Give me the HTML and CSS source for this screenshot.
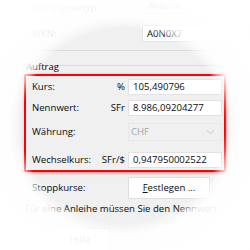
FILE: index.html
```html
<!DOCTYPE html>
<html lang="de">
<head>
<meta charset="utf-8">
<link rel="stylesheet" href="styles.css">
</head>
<body>
<div class="dialog">
  <div class="row r-type">
    <span class="lbl">Wertpapiertyp:</span>
    <span class="combo-top">Anleihe</span>
  </div>
  <div class="row r-wkn">
    <span class="lbl">WKN:</span>
    <span class="field wide">A0N0X7</span>
  </div>
  <div class="sep"></div>
  <div class="group">
    <div class="legend">Auftrag</div>
    <div class="highlight">
      <div class="frow f1">
        <span class="flbl">Kurs:</span><span class="unit">%</span><span class="field">105,490796</span>
      </div>
      <div class="frow f2">
        <span class="flbl">Nennwert:</span><span class="unit">SFr</span><span class="field">8.986,09204277</span>
      </div>
      <div class="frow f3">
        <span class="flbl">Währung:</span><span class="unit"></span><span class="combo-dis">CHF<svg class="chev" width="9" height="6" viewBox="0 0 9 6"><path d="M1 1.5 L4.5 4.5 L8 1.5" fill="none" stroke="#c4c4c4" stroke-width="1"/></svg></span>
      </div>
      <div class="frow f4">
        <span class="flbl">Wechselkurs:</span><span class="unit">SFr/$</span><span class="field">0,947950002522</span>
      </div>
    </div>
  </div>
  <div class="row r-stopp">
    <span class="lbl2">Stoppkurse:</span>
    <span class="btn festlegen"><u>F</u>estlegen ...</span>
  </div>
  <p class="note">Für eine Anleihe müssen Sie den Nennwert</p>
  <div class="btnrow">
    <span class="btn hilfe">Hilfe</span>
  </div>
  <div class="vignette"></div>
</div>
</body>
</html>
```
FILE: styles.css
```css
html, body {
  margin: 0;
  padding: 0;
  background: #ffffff;
}
.dialog {
  position: relative;
  width: 250px;
  height: 250px;
  overflow: hidden;
  background: #f0f0f0;
  font-family: "Open Sans", "Noto Sans", sans-serif;
  font-size: 9.6px;
  color: #0a0a0a;
  line-height: 14px;
}
.row {
  display: flex;
  align-items: center;
}
.lbl {
  width: 110px;
  margin-left: 32px;
  flex: none;
}
.r-type {
  height: 17px;
  margin-top: -1px;
}
.combo-top {
  align-self: flex-start;
  width: 100px;
  height: 14px;
  border-bottom: 1px solid #d4d4d4;
  padding-left: 6px;
  display: flex;
  align-items: center;
}
.r-wkn {
  height: 17px;
  margin-top: 9px;
}
.field {
  box-sizing: border-box;
  height: 16px;
  background: #fff;
  border: 1px solid #e2e2e2;
  padding-left: 4px;
  display: flex;
  align-items: center;
  white-space: nowrap;
}
.field.wide {
  width: 130px;
  height: 17px;
}
.sep {
  margin-top: 8px;
  height: 1px;
  background: #dadada;
}
.group {
  margin-top: 14px;
  border-top: 1px solid #dadada;
}
.legend {
  width: fit-content;
  margin-top: -6px;
  margin-left: 25px;
  padding: 0 1px;
  background: #f0f0f0;
}
.highlight {
  box-sizing: border-box;
  width: 202px;
  margin-left: 24px;
  border: 2px solid #ff0000;
  box-shadow: 1px 1px 3px rgba(255, 0, 0, 0.45);
  padding: 2px 2px 1px 6px;
}
.frow {
  display: grid;
  grid-template-columns: 1fr auto 94px;
  column-gap: 3px;
  align-items: center;
  height: 18px;
}
.f2 { margin-top: 3px; }
.f3 { margin-top: 6px; }
.f4 { margin-top: 10px; }
.unit {
  text-align: right;
}
.combo-dis {
  box-sizing: border-box;
  height: 18px;
  border: 1px solid #e8e8e8;
  color: #a6a6a6;
  padding-left: 2px;
  padding-right: 6px;
  display: flex;
  align-items: center;
  justify-content: space-between;
}
.r-stopp {
  margin-top: 5px;
  height: 22px;
}
.lbl2 {
  width: 96px;
  margin-left: 32px;
  flex: none;
}
.btn {
  box-sizing: border-box;
  background: #fff;
  border: 1px solid #dedede;
  display: flex;
  align-items: center;
  justify-content: center;
}
.festlegen {
  width: 82px;
  height: 22px;
}
.note {
  margin: 3px 0 0 25px;
  white-space: nowrap;
}
.btnrow {
  margin-top: 12px;
  display: flex;
}
.hilfe {
  margin-left: 50px;
  width: 60px;
  height: 24px;
}
.vignette {
  position: absolute;
  inset: 0;
  pointer-events: none;
  background: radial-gradient(ellipse 107px 102px at 123px 126px,
    rgba(255, 255, 255, 0) 95%,
    rgba(255, 255, 255, 0.55) 101%,
    rgba(255, 255, 255, 0.9) 107%,
    rgba(255, 255, 255, 0.98) 130%);
}
```
